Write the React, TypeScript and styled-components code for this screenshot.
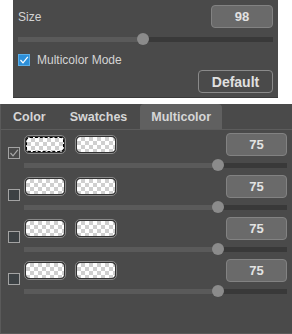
import React from "react";
import styled, { createGlobalStyle } from "styled-components";

const Global = createGlobalStyle`
  html, body { margin: 0; padding: 0; background: #ffffff; }
  body { font-family: "Liberation Sans", Arial, sans-serif; }
  * { box-sizing: border-box; }
`;

const Page = styled.div`
  width: 292px;
  height: 334px;
  display: flex;
  flex-direction: column;
`;

const TopPanel = styled.div`
  margin-left: 13px;
  width: 265px;
  height: 98px;
  background: #4a4a4a;
  border-bottom: 1px solid #3a3a3a;
  padding: 5px 5px 0 5px;
  display: flex;
  flex-direction: column;
`;

const HeadRow = styled.div`
  display: flex;
  justify-content: space-between;
  align-items: center;
  height: 23px;
`;

const Label = styled.span`
  color: #d4d4d4;
  font-size: 12px;
`;

const ValueBox = styled.div<{ $w: number }>`
  width: ${(p) => p.$w}px;
  height: 23px;
  background: #6a6a6a;
  border: 1px solid #828282;
  border-radius: 4px;
  color: #e2e2e2;
  font-weight: bold;
  font-size: 13px;
  display: flex;
  align-items: center;
  justify-content: center;
`;

const SliderWrap = styled.div<{ $mt: number }>`
  position: relative;
  height: 12px;
  margin-top: ${(p) => p.$mt}px;
  display: flex;
  align-items: center;
`;

const Track = styled.div`
  width: 100%;
  height: 5px;
  background: #393939;
  position: relative;
`;

const Fill = styled.div`
  position: absolute;
  left: 0;
  top: 0;
  bottom: 0;
  background: #5a5a5a;
`;

const Thumb = styled.div`
  position: absolute;
  top: 0;
  width: 12px;
  height: 12px;
  margin-left: -6px;
  border-radius: 50%;
  background: #8b8b8b;
`;

const Slider = ({ pct, mt }: { pct: number; mt: number }) => (
  <SliderWrap $mt={mt}>
    <Track>
      <Fill style={{ width: `${pct}%` }} />
    </Track>
    <Thumb style={{ left: `calc(6px + (100% - 12px) * ${pct / 100})` }} />
  </SliderWrap>
);

const CheckRow = styled.div`
  display: flex;
  align-items: center;
  gap: 7px;
  margin-top: 9px;
  height: 12px;
`;

const BlueBox = styled.div`
  width: 12px;
  height: 12px;
  background: #2d8fd9;
  border: 1px solid #5aaee8;
  display: flex;
  align-items: center;
  justify-content: center;
`;

const ButtonRow = styled.div`
  display: flex;
  justify-content: flex-end;
  margin-top: 4px;
`;

const Button = styled.div`
  width: 75px;
  height: 23px;
  border: 1px solid #8a8a8a;
  border-radius: 4px;
  color: #e0e0e0;
  font-weight: bold;
  font-size: 14px;
  display: flex;
  align-items: center;
  justify-content: center;
`;

const BottomPanel = styled.div`
  margin-top: 6px;
  height: 230px;
  background: #4a4a4a;
  border-left: 1px solid #5a5a5a;
  border-bottom: 1px solid #5a5a5a;
  display: flex;
  flex-direction: column;
`;

const TabBar = styled.div`
  height: 26px;
  display: flex;
  gap: 2px;
  padding-left: 1px;
  border-bottom: 1px solid #5c5c5c;
`;

const Tab = styled.div<{ $active?: boolean }>`
  height: 25px;
  padding: 0 11px;
  display: flex;
  align-items: center;
  font-size: 12.5px;
  font-weight: bold;
  color: #d6d6d6;
  border-radius: 4px 4px 0 0;
  background: ${(p) => (p.$active ? "#606060" : "transparent")};
`;

const Rows = styled.div`
  padding-top: 3px;
  display: flex;
  flex-direction: column;
`;

const Row = styled.div`
  display: flex;
  height: 42px;
  padding-left: 7px;
  padding-right: 5px;
  gap: 4px;
`;

const SmallCheck = styled.div<{ $checked?: boolean }>`
  width: 12px;
  height: 12px;
  margin-top: 14px;
  flex: none;
  border: 1px solid #a3a3a3;
  background: ${(p) => (p.$checked ? "transparent" : "#3c4144")};
  display: flex;
  align-items: center;
  justify-content: center;
`;

const RowBody = styled.div`
  flex: 1;
  display: flex;
  flex-direction: column;
`;

const RowTop = styled.div`
  height: 23px;
  display: flex;
  align-items: flex-start;
`;

const Swatches = styled.div`
  display: flex;
  gap: 9px;
  margin-top: 2px;
  flex: 1;
`;

const Swatch = styled.div`
  width: 42px;
  height: 19px;
  border: 1px solid #8a8a8a;
  border-radius: 5px;
  padding: 1px;
  background: #333;
`;

const Checker = styled.div<{ $sel?: boolean }>`
  width: 100%;
  height: 100%;
  border-radius: 4px;
  background-color: #ffffff;
  background-image: linear-gradient(45deg, #cfcfcf 25%, transparent 25%, transparent 75%, #cfcfcf 75%),
    linear-gradient(45deg, #cfcfcf 25%, transparent 25%, transparent 75%, #cfcfcf 75%);
  background-size: 8px 8px;
  background-position: 0 0, 4px 4px;
  border: ${(p) => (p.$sel ? "1px dashed #000" : "none")};
`;

const Tick = ({ color }: { color: string }) => (
  <svg width="10" height="10" viewBox="0 0 10 10">
    <path d="M1.5 5 L4 7.8 L8.8 1.8" fill="none" stroke={color} strokeWidth="1.2" />
  </svg>
);

export default function App() {
  const rows = [0, 1, 2, 3];
  return (
    <Page>
      <Global />
      <TopPanel>
        <HeadRow>
          <Label>Size</Label>
          <ValueBox $w={62}>98</ValueBox>
        </HeadRow>
        <Slider pct={49} mt={5} />
        <CheckRow>
          <BlueBox>
            <Tick color="#ffffff" />
          </BlueBox>
          <Label>Multicolor Mode</Label>
        </CheckRow>
        <ButtonRow>
          <Button>Default</Button>
        </ButtonRow>
      </TopPanel>
      <BottomPanel>
        <TabBar>
          <Tab>Color</Tab>
          <Tab>Swatches</Tab>
          <Tab $active>Multicolor</Tab>
        </TabBar>
        <Rows>
          {rows.map((i) => (
            <Row key={i}>
              <SmallCheck $checked={i === 0}>{i === 0 && <Tick color="#a8a8a8" />}</SmallCheck>
              <RowBody>
                <RowTop>
                  <Swatches>
                    <Swatch>
                      <Checker $sel={i === 0} />
                    </Swatch>
                    <Swatch>
                      <Checker />
                    </Swatch>
                  </Swatches>
                  <ValueBox $w={61}>75</ValueBox>
                </RowTop>
                <Slider pct={75} mt={3} />
              </RowBody>
            </Row>
          ))}
        </Rows>
      </BottomPanel>
    </Page>
  );
}
